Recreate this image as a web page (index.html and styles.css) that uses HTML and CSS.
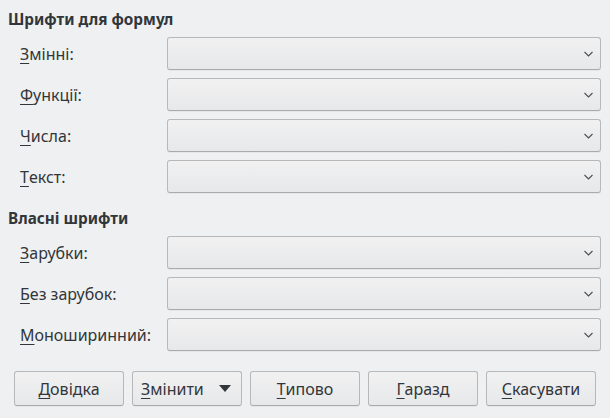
FILE: index.html
```html
<!DOCTYPE html>
<html lang="uk">
<head>
<meta charset="utf-8">
<link rel="stylesheet" href="styles.css">
</head>
<body>
<div class="dialog">
  <div class="section-title">Шрифти для формул</div>
  <div class="form">
    <label class="lbl"><u>З</u>мінні:</label>
    <div class="combo"><svg class="chev" width="9" height="6" viewBox="0 0 9 6"><path d="M0.5 1 L4.5 5 L8.5 1" fill="none" stroke="#4d4f52" stroke-width="1.1"/></svg></div>
    <label class="lbl"><u>Ф</u>ункції:</label>
    <div class="combo"><svg class="chev" width="9" height="6" viewBox="0 0 9 6"><path d="M0.5 1 L4.5 5 L8.5 1" fill="none" stroke="#4d4f52" stroke-width="1.1"/></svg></div>
    <label class="lbl"><u>Ч</u>исла:</label>
    <div class="combo"><svg class="chev" width="9" height="6" viewBox="0 0 9 6"><path d="M0.5 1 L4.5 5 L8.5 1" fill="none" stroke="#4d4f52" stroke-width="1.1"/></svg></div>
    <label class="lbl"><u>Т</u>екст:</label>
    <div class="combo"><svg class="chev" width="9" height="6" viewBox="0 0 9 6"><path d="M0.5 1 L4.5 5 L8.5 1" fill="none" stroke="#4d4f52" stroke-width="1.1"/></svg></div>
  </div>
  <div class="section-title second">Власні шрифти</div>
  <div class="form">
    <label class="lbl"><u>З</u>арубки:</label>
    <div class="combo"><svg class="chev" width="9" height="6" viewBox="0 0 9 6"><path d="M0.5 1 L4.5 5 L8.5 1" fill="none" stroke="#4d4f52" stroke-width="1.1"/></svg></div>
    <label class="lbl"><u>Б</u>ез зарубок:</label>
    <div class="combo"><svg class="chev" width="9" height="6" viewBox="0 0 9 6"><path d="M0.5 1 L4.5 5 L8.5 1" fill="none" stroke="#4d4f52" stroke-width="1.1"/></svg></div>
    <label class="lbl"><u>М</u>оноширинний:</label>
    <div class="combo"><svg class="chev" width="9" height="6" viewBox="0 0 9 6"><path d="M0.5 1 L4.5 5 L8.5 1" fill="none" stroke="#4d4f52" stroke-width="1.1"/></svg></div>
  </div>
  <div class="buttons">
    <button class="btn"><u>Д</u>овідка</button>
    <button class="btn menu"><span><u>З</u>мінити</span><svg class="tri" width="12" height="7" viewBox="0 0 12 7"><path d="M0 0 L12 0 L6 7 Z" fill="#31363b"/></svg></button>
    <button class="btn"><u>Т</u>ипово</button>
    <button class="btn"><u>Г</u>аразд</button>
    <button class="btn"><u>С</u>касувати</button>
  </div>
</div>
</body>
</html>
```
FILE: styles.css
```css
html, body {
  margin: 0;
  padding: 0;
  background: #eff0f1;
}
body {
  width: 610px;
  height: 418px;
  overflow: hidden;
  font-family: "Noto Sans", "Open Sans", sans-serif;
  font-size: 16px;
  color: #31363b;
}
.dialog {
  padding: 9px 9px 0 8px;
}
.section-title {
  font-weight: bold;
  font-size: 15.3px;
  line-height: 20px;
  height: 20px;
  margin-bottom: 8px;
}
.section-title.second {
  margin-top: 15px;
}
.form {
  display: grid;
  grid-template-columns: 147px 1fr;
  row-gap: 8px;
  padding-left: 12px;
}
.lbl {
  display: flex;
  align-items: center;
  height: 33px;
  white-space: nowrap;
}
u {
  text-decoration: underline;
  text-decoration-thickness: 1px;
  text-underline-offset: 3px;
}
.combo {
  height: 31px;
  border: 1px solid #b7b8ba;
  border-bottom-color: #a9aaac;
  border-radius: 3px;
  background: linear-gradient(#f1f1f2, #e7e8e9);
  display: flex;
  align-items: center;
  justify-content: flex-end;
  padding-right: 7px;
  box-shadow: 0 1px 0 rgba(0,0,0,0.04);
}
.chev {
  display: block;
}
.buttons {
  display: flex;
  gap: 8px;
  margin-top: 20px;
  padding-left: 6px;
}
.btn {
  width: 110px;
  height: 35px;
  border: 1px solid #b7b8ba;
  border-bottom-color: #a9aaac;
  border-radius: 3px;
  background: linear-gradient(#f1f1f2, #e7e8e9);
  font-family: "Noto Sans", "Open Sans", sans-serif;
  font-size: 16px;
  color: #31363b;
  padding: 0;
  display: flex;
  align-items: center;
  justify-content: center;
  box-shadow: 0 1px 0 rgba(0,0,0,0.04);
}
.btn.menu {
  justify-content: flex-start;
  padding-left: 8px;
}
.btn.menu .tri {
  margin-left: 15px;
}
```
